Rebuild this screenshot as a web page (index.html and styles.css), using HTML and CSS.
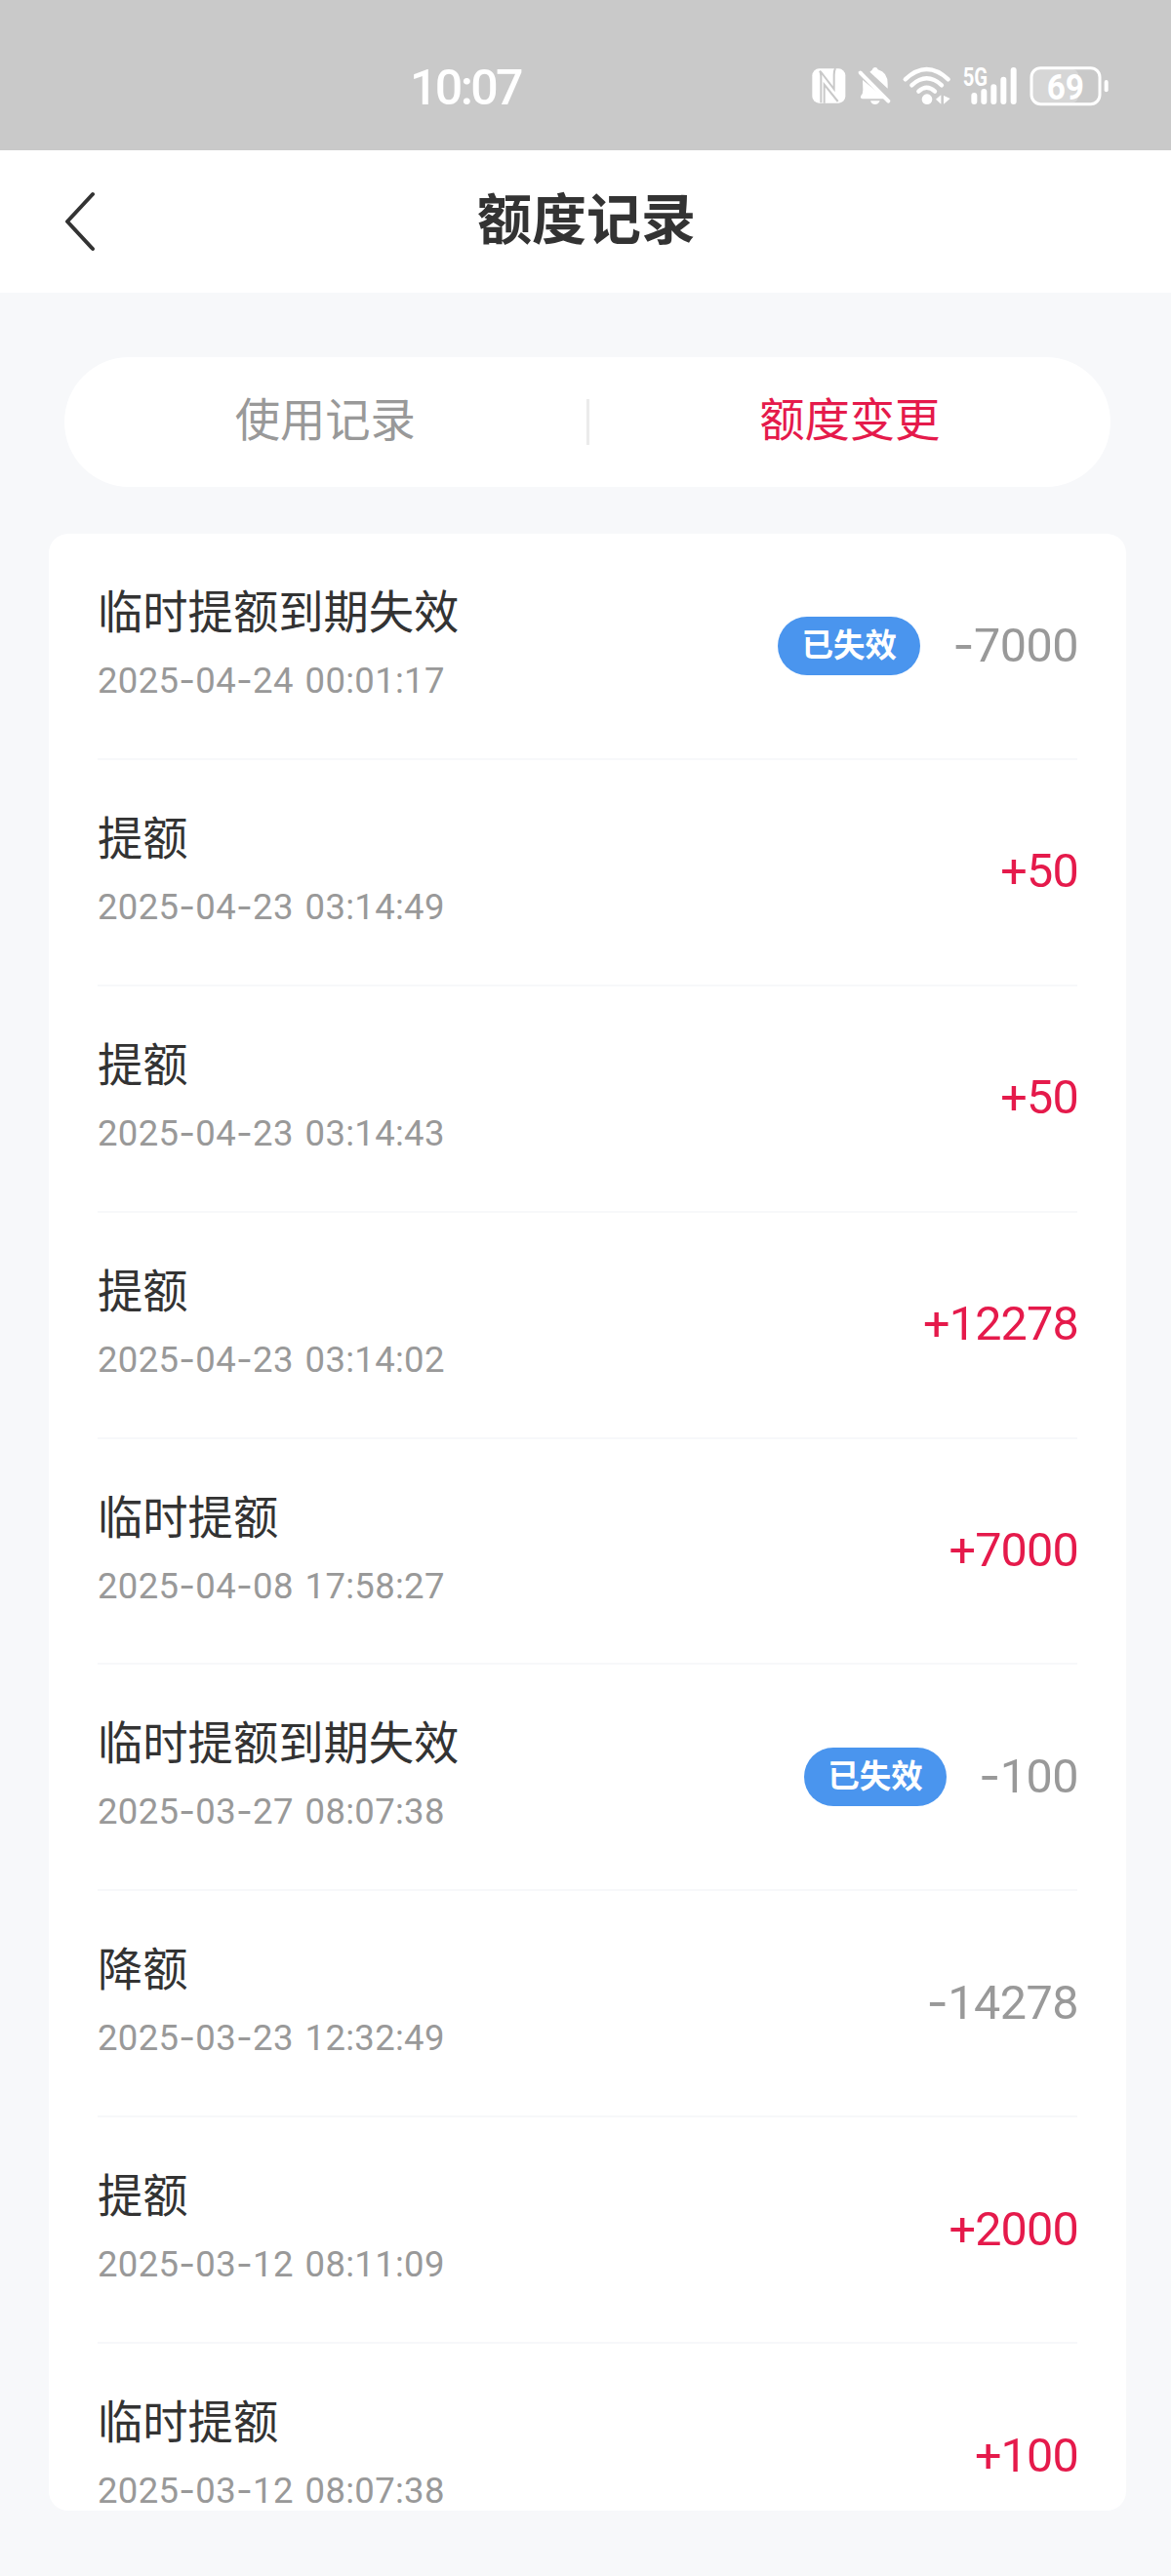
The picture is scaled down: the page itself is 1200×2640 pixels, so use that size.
FILE: index.html
```html
<!DOCTYPE html>
<html lang="zh-CN">
<head>
	<meta charset="utf-8">
	<title>额度记录</title>
	<link rel="stylesheet" href="styles.css">
</head>
<body>
	<div class="status-bar">
		<span class="clock">10:07</span>
		<div class="status-icons">
			<!-- nfc -->
			<svg width="35" height="40" viewBox="0 0 105 120">
				<rect class="fill" x="1" y="7" width="102" height="106" rx="21"/>
				<path class="cut" d="M24 14Q28 20 28 30V112M26 15L68 70V26Q68 14 72 6M38 113V56L80 108"/>
			</svg>
			<!-- mute -->
			<svg width="34" height="40" viewBox="0 0 102 120">
				<path class="fill" d="M15 42L86 100H14Q6 98 10 90Q16 84 16 72Z"/>
				<path class="fill" d="M37 17L44 11Q46 3 53 3Q60 3 62 10Q92 18 92 54V68Z"/>
				<path class="line" stroke-width="12" d="M8 20L94 107"/>
				<path class="fill" d="M39 106H68Q64 117 53 117Q42 117 39 106Z"/>
			</svg>
			<!-- wifi -->
			<svg width="50" height="40" viewBox="0 0 150 120">
				<path class="line" stroke-width="13" d="M8 40Q74 -22 140 40M28 58Q74 16 120 58M49 77Q74 54 99 77"/>
				<circle class="fill" cx="75" cy="101" r="16"/>
				<path class="fill" d="M102 101L118 88V116ZM146 99L126 90V116Z"/>
			</svg>
			<!-- signal -->
			<svg width="56" height="40" viewBox="0 0 168 120">
				<text class="net" x="-1" y="59" textLength="76" lengthAdjust="spacingAndGlyphs">5G</text>
				<path class="line" stroke-width="18" d="M34 90V108M64 78V108M94 64V108M124 41V108M155 12V108"/>
			</svg>
			<!-- battery -->
			<svg width="82" height="40" viewBox="0 0 246 120">
				<rect class="level" x="8" y="8" width="142" height="104" rx="20"/>
				<rect class="outline" x="6" y="5" width="210" height="111" rx="28"/>
				<path class="line" stroke-width="12" d="M236 48V73"/>
				<text class="percent" x="53" y="101" textLength="115" lengthAdjust="spacingAndGlyphs">69</text>
			</svg>
		</div>
	</div>

	<div class="header">
		<svg class="back" width="32" height="62" viewBox="0 0 32 62">
			<path d="M30 3L4 31L30 59"/>
		</svg>
		<h1>额度记录</h1>
	</div>

	<div class="tabs">
		<div class="tab">使用记录</div>
		<div class="split"></div>
		<div class="tab active">额度变更</div>
	</div>

	<div class="list">
		<div class="row">
			<div class="info">
				<p class="name">临时提额到期失效</p>
				<p class="time">2025<i>-</i>04<i>-</i>24 00:01:17</p>
			</div>
			<span class="badge">已失效</span>
			<span class="amount"><i>-</i>7000</span>
		</div>
		<div class="row">
			<div class="info">
				<p class="name">提额</p>
				<p class="time">2025<i>-</i>04<i>-</i>23 03:14:49</p>
			</div>
			<span class="amount up">+50</span>
		</div>
		<div class="row">
			<div class="info">
				<p class="name">提额</p>
				<p class="time">2025<i>-</i>04<i>-</i>23 03:14:43</p>
			</div>
			<span class="amount up">+50</span>
		</div>
		<div class="row">
			<div class="info">
				<p class="name">提额</p>
				<p class="time">2025<i>-</i>04<i>-</i>23 03:14:02</p>
			</div>
			<span class="amount up">+12278</span>
		</div>
		<div class="row">
			<div class="info">
				<p class="name">临时提额</p>
				<p class="time">2025<i>-</i>04<i>-</i>08 17:58:27</p>
			</div>
			<span class="amount up">+7000</span>
		</div>
		<div class="row">
			<div class="info">
				<p class="name">临时提额到期失效</p>
				<p class="time">2025<i>-</i>03<i>-</i>27 08:07:38</p>
			</div>
			<span class="badge">已失效</span>
			<span class="amount"><i>-</i>100</span>
		</div>
		<div class="row">
			<div class="info">
				<p class="name">降额</p>
				<p class="time">2025<i>-</i>03<i>-</i>23 12:32:49</p>
			</div>
			<span class="amount"><i>-</i>14278</span>
		</div>
		<div class="row">
			<div class="info">
				<p class="name">提额</p>
				<p class="time">2025<i>-</i>03<i>-</i>12 08:11:09</p>
			</div>
			<span class="amount up">+2000</span>
		</div>
		<div class="row">
			<div class="info">
				<p class="name">临时提额</p>
				<p class="time">2025<i>-</i>03<i>-</i>12 08:07:38</p>
			</div>
			<span class="amount up">+100</span>
		</div>
	</div>
</body>
</html>
```

FILE: styles.css
```css
* {
	box-sizing: border-box;
	margin: 0;
	padding: 0;
}
body {
	height: 2640px;
	background: #f7f8fa;
	color: #333;
	font-family: Roboto, "Noto Sans CJK SC", sans-serif;
}

/* status bar */
.status-bar {
	display: flex;
	height: 154px;
	padding: 68px 63px 0 420px;
	justify-content: space-between;
	background: #c9c9c9;
	color: #fff;
}
.clock {
	font-size: 50px;
	font-weight: 500;
	line-height: 44px;
	letter-spacing: -2.6px;
}
.status-icons {display: flex; gap: 12px;}
.status-icons svg {overflow: visible;}
.fill {fill: #fff;}
.cut {fill: none; stroke: #c9c9c9; stroke-width: 6;}
.line {fill: none; stroke: #fff; stroke-linecap: round;}
.outline {fill: none; stroke: #fff; stroke-width: 9;}
.level {fill: #d6d6d6;}
.net {fill: #fff; font-size: 76px; font-weight: 700;}
.percent {fill: #fff; font-size: 110px; font-weight: 700;}

/* header */
.header {
	display: grid;
	grid-template-columns: 98px 1fr 98px;
	align-items: center;
	height: 146px;
	padding: 0 0 1px 2px;
	background: #fff;
}
.back {justify-self: end; margin-right: 3px;}
.back path {
	fill: none;
	stroke: #333;
	stroke-width: 4;
	stroke-linecap: round;
	stroke-linejoin: round;
}
.header h1 {
	padding-bottom: 2px;
	font-size: 56px;
	font-weight: 700;
	line-height: 80px;
	text-align: center;
}

/* tabs */
.tabs {
	display: flex;
	align-items: center;
	height: 133px;
	margin: 66px 62px 0 66px;
	border-radius: 67px;
	background: #fff;
}
.tab {
	flex: 1;
	padding-bottom: 3px;
	color: #999;
	font-size: 46.3px;
	line-height: 66px;
	text-align: center;
}
.tab.active {color: #e51a4b;}
.split {width: 3px; height: 47px; background: #ebebeb;}

/* records */
.list {
	height: 2026px;
	margin: 48px 46px 0 50px;
	padding: 0 50px;
	border-radius: 20px;
	background: #fff;
}
.row {
	display: flex;
	align-items: center;
	height: 231.9px;
	border-bottom: 2px solid #f7f8fa;
}
.row:last-child {border-bottom-color: transparent;}
.info {flex: 1; padding-bottom: 4px;}
.name {
	font-size: 46.3px;
	line-height: 68px;
}
.time {
	margin-top: 12px;
	padding-bottom: 5px;
	color: #999;
	font-size: 36.5px;
	line-height: 46px;
	letter-spacing: 0.3px;
	word-spacing: 2.5px;
}
.time i, .amount i {font-family: Inter, sans-serif; font-style: normal;}
.badge {
	width: 146px;
	height: 60px;
	margin-right: 33px;
	border-radius: 30px;
	background: #4a95ee;
	color: #fff;
	font-size: 32.5px;
	font-weight: 700;
	line-height: 61px;
	text-align: center;
}
.amount {
	margin-right: -1px;
	padding-bottom: 1px;
	color: #999;
	font-size: 48.5px;
	line-height: 64px;
	letter-spacing: -0.5px;
}
.amount.up {color: #e51a4b; letter-spacing: -0.8px;}
```
